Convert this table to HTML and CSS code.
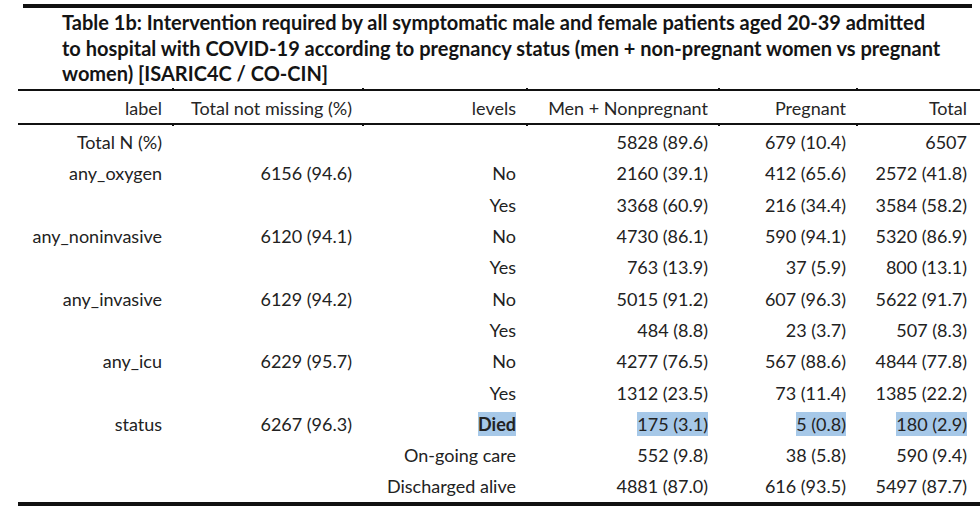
FILE: index.html
```html
<!DOCTYPE html>
<html>
<head>
<meta charset="utf-8">
<link rel="stylesheet" href="styles.css">
</head>
<body>
<div class="page">
  <div class="title-rule"></div>
  <h1 class="title">Table 1b: Intervention required by all symptomatic male and female patients aged 20-39 admitted<br>to hospital with COVID-19 according to pregnancy status (men + non-pregnant women vs pregnant<br>women) [ISARIC4C / CO-CIN]</h1>
  <table class="data">
    <colgroup>
      <col class="c1"><col class="c2"><col class="c3"><col class="c4"><col class="c5"><col class="c6">
    </colgroup>
    <thead>
      <tr><th>label</th><th class="tick">Total not missing (%)</th><th class="tick">levels</th><th class="tick">Men + Nonpregnant</th><th class="tick">Pregnant</th><th class="tick">Total</th></tr>
    </thead>
    <tbody>
      <tr class="first"><td>Total N (%)</td><td></td><td></td><td>5828 (89.6)</td><td>679 (10.4)</td><td>6507</td></tr>
      <tr><td>any_oxygen</td><td>6156 (94.6)</td><td>No</td><td>2160 (39.1)</td><td>412 (65.6)</td><td>2572 (41.8)</td></tr>
      <tr><td></td><td></td><td>Yes</td><td>3368 (60.9)</td><td>216 (34.4)</td><td>3584 (58.2)</td></tr>
      <tr><td>any_noninvasive</td><td>6120 (94.1)</td><td>No</td><td>4730 (86.1)</td><td>590 (94.1)</td><td>5320 (86.9)</td></tr>
      <tr><td></td><td></td><td>Yes</td><td>763 (13.9)</td><td>37 (5.9)</td><td>800 (13.1)</td></tr>
      <tr><td>any_invasive</td><td>6129 (94.2)</td><td>No</td><td>5015 (91.2)</td><td>607 (96.3)</td><td>5622 (91.7)</td></tr>
      <tr><td></td><td></td><td>Yes</td><td>484 (8.8)</td><td>23 (3.7)</td><td>507 (8.3)</td></tr>
      <tr><td>any_icu</td><td>6229 (95.7)</td><td>No</td><td>4277 (76.5)</td><td>567 (88.6)</td><td>4844 (77.8)</td></tr>
      <tr><td></td><td></td><td>Yes</td><td>1312 (23.5)</td><td>73 (11.4)</td><td>1385 (22.2)</td></tr>
      <tr><td>status</td><td>6267 (96.3)</td><td><span class="hl bold">Died</span></td><td><span class="hl">175 (3.1)</span></td><td><span class="hl">5 (0.8)</span></td><td><span class="hl">180 (2.9)</span></td></tr>
      <tr><td></td><td></td><td>On-going care</td><td>552 (9.8)</td><td>38 (5.8)</td><td>590 (9.4)</td></tr>
      <tr><td></td><td></td><td>Discharged alive</td><td>4881 (87.0)</td><td>616 (93.5)</td><td>5497 (87.7)</td></tr>
    </tbody>
  </table>
</div>
</body>
</html>
```

FILE: styles.css
```css
html, body {
  margin: 0;
  padding: 0;
  background: #ffffff;
}

body {
  font-family: "Lato", "Open Sans", sans-serif;
  color: #222222;
  width: 980px;
  height: 517px;
  overflow: hidden;
}

.page {
  padding-top: 4px;
}

.title-rule {
  margin-left: 23px;
  width: 949px;
  height: 4px;
  background: #111111;
}

.title {
  margin: 2px 0 0 62px;
  font-size: 20px;
  font-weight: 700;
  line-height: 25.5px;
  color: #141414;
  white-space: nowrap;
}

.data {
  margin: 2px 0 0 18px;
  width: 962px;
  border-collapse: collapse;
  table-layout: fixed;
  font-size: 18px;
}

.c1 { width: 155px; }
.c2 { width: 190px; }
.c3 { width: 164px; }
.c4 { width: 192px; }
.c5 { width: 138px; }
.c6 { width: 123px; }

.data th {
  font-weight: 400;
  text-align: right;
  height: 29px;
  padding: 3px 11px 0 0;
  border-top: 2px solid #111111;
  border-bottom: 2px solid #111111;
  color: #262626;
  white-space: nowrap;
}

.data th.tick {
  position: relative;
}

.data th.tick::before,
.data th.tick::after {
  content: "";
  position: absolute;
  left: -1px;
  width: 2px;
  height: 2px;
  background: #111111;
}

.data th.tick::before {
  top: -3px;
}

.data th.tick::after {
  bottom: -3px;
}

.data th:last-child,
.data td:last-child {
  padding-right: 13px;
}

.data td {
  text-align: right;
  height: 31.3px;
  padding: 0 11px 0 0;
  white-space: nowrap;
  color: #222222;
}

.data tr.first td {
  padding-top: 2px;
}

.data tbody tr:last-child td {
  border-bottom: 4px solid #111111;
}

.hl {
  background: #a6c8e8;
  padding: 1px 0;
}

.bold {
  font-weight: 700;
}
```
